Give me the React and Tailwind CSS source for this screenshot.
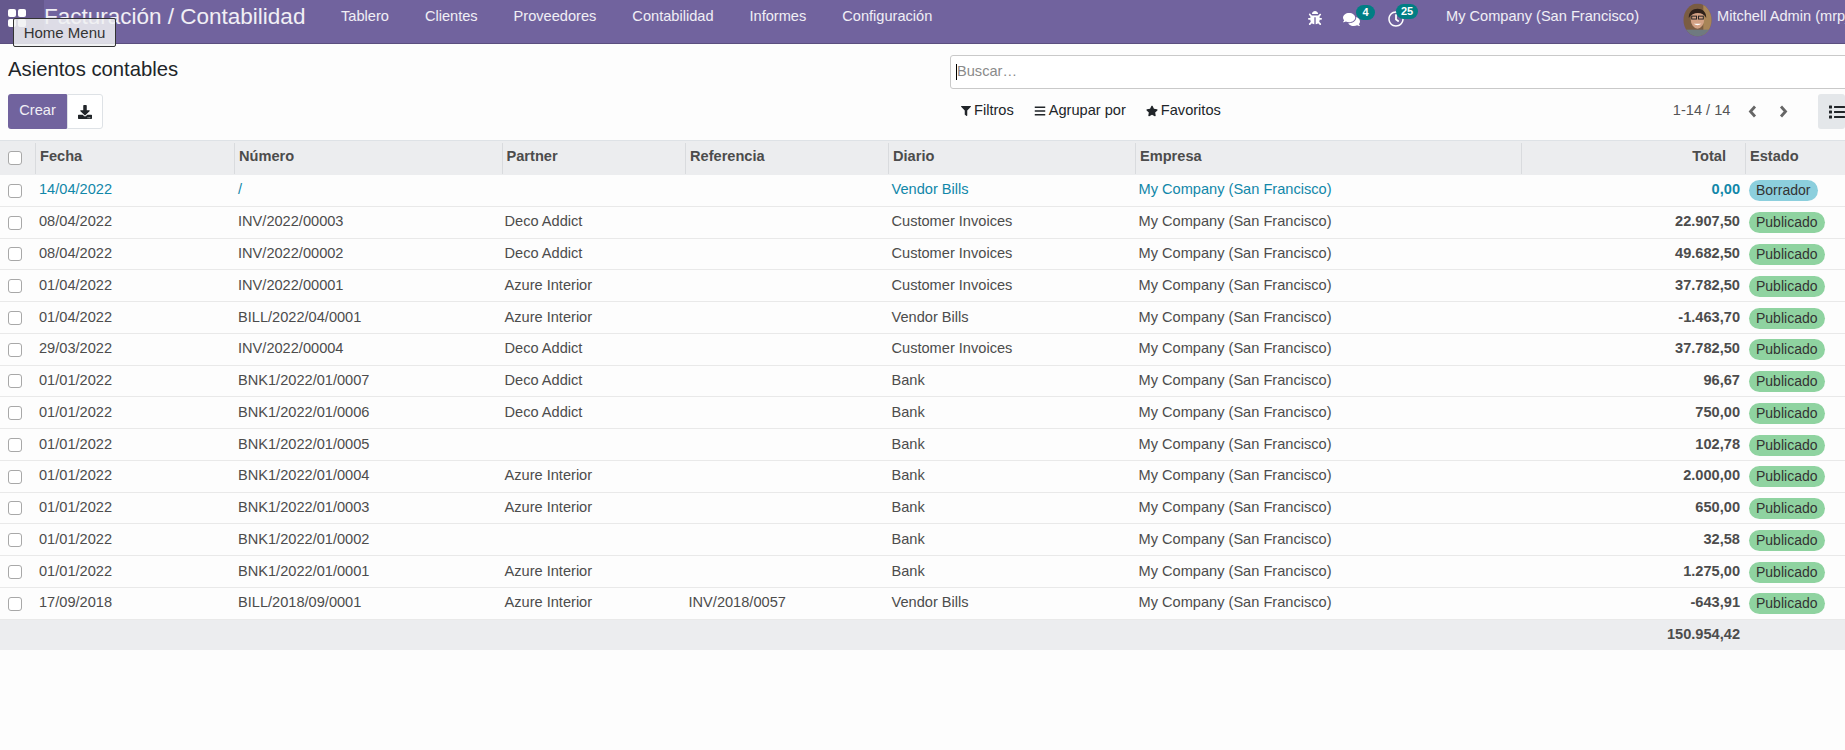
import { FaBug, FaComments, FaRegClock, FaFilter, FaBars, FaStar, FaDownload, FaList } from "react-icons/fa";

const rows = [
  ["14/04/2022", "/", "", "", "Vendor Bills", "0,00", "Borrador"],
  ["08/04/2022", "INV/2022/00003", "Deco Addict", "", "Customer Invoices", "22.907,50", "Publicado"],
  ["08/04/2022", "INV/2022/00002", "Deco Addict", "", "Customer Invoices", "49.682,50", "Publicado"],
  ["01/04/2022", "INV/2022/00001", "Azure Interior", "", "Customer Invoices", "37.782,50", "Publicado"],
  ["01/04/2022", "BILL/2022/04/0001", "Azure Interior", "", "Vendor Bills", "-1.463,70", "Publicado"],
  ["29/03/2022", "INV/2022/00004", "Deco Addict", "", "Customer Invoices", "37.782,50", "Publicado"],
  ["01/01/2022", "BNK1/2022/01/0007", "Deco Addict", "", "Bank", "96,67", "Publicado"],
  ["01/01/2022", "BNK1/2022/01/0006", "Deco Addict", "", "Bank", "750,00", "Publicado"],
  ["01/01/2022", "BNK1/2022/01/0005", "", "", "Bank", "102,78", "Publicado"],
  ["01/01/2022", "BNK1/2022/01/0004", "Azure Interior", "", "Bank", "2.000,00", "Publicado"],
  ["01/01/2022", "BNK1/2022/01/0003", "Azure Interior", "", "Bank", "650,00", "Publicado"],
  ["01/01/2022", "BNK1/2022/01/0002", "", "", "Bank", "32,58", "Publicado"],
  ["01/01/2022", "BNK1/2022/01/0001", "Azure Interior", "", "Bank", "1.275,00", "Publicado"],
  ["17/09/2018", "BILL/2018/09/0001", "Azure Interior", "INV/2018/0057", "Vendor Bills", "-643,91", "Publicado"],
];

const menu = ["Tablero", "Clientes", "Proveedores", "Contabilidad", "Informes", "Configuración"];

function Check() {
  return <span className="block w-[14px] h-[14px] ml-2 rounded-[3px] border border-[#a8a8a8] bg-white" />;
}

function Th({ children, right }) {
  return (
    <th className="p-0 font-bold align-top pt-[2px]">
      <div className={"h-[31px] border-l border-[#d9dbde] flex items-center pl-[4px] pb-[3px] " + (right ? "justify-end pr-[19px]" : "")}>
        {children}
      </div>
    </th>
  );
}

function Chevron({ points, className }) {
  return (
    <svg viewBox="0 0 9 13" className={"w-[9px] h-[13px] shrink-0 " + className}>
      <polyline points={points} fill="none" stroke="#666" strokeWidth="2.8" />
    </svg>
  );
}

function Avatar() {
  return (
    <svg viewBox="0 0 30 34" className="w-[29px] h-[34px] shrink-0">
      <defs>
        <clipPath id="av"><ellipse cx="15" cy="17" rx="14.5" ry="17" /></clipPath>
      </defs>
      <g clipPath="url(#av)">
        <rect width="30" height="34" fill="#7a5c42" />
        <rect x="21" width="9" height="34" fill="#a88558" />
        <rect y="27" width="30" height="7" fill="#6f7a80" />
        <ellipse cx="15" cy="16" rx="7" ry="10" fill="#d3a184" />
        <path d="M6 15 C5 2 25 2 24 15 C21 8 10 8 6 15Z" fill="#2e211a" />
        <rect x="9" y="13" width="5" height="3" fill="none" stroke="#222" strokeWidth="1" />
        <rect x="16" y="13" width="5" height="3" fill="none" stroke="#222" strokeWidth="1" />
        <path d="M11 21 Q15 24 19 21" fill="#fff" />
      </g>
    </svg>
  );
}

export default function App() {
  return (
    <div className="w-[1845px] h-[750px] overflow-hidden bg-[#fdfdfd] text-[14.6px] text-[#4c4c4c] font-['Liberation_Sans',Arial,sans-serif] relative">
      {/* navbar */}
      <header className="h-[44px] bg-[#71639e] border-b border-[#5b4f7f] flex items-start text-white/90 whitespace-nowrap">
        <div className="w-[44px] h-[43px] bg-black/10 flex items-start pl-2 pt-[9px] shrink-0">
          <span className="grid grid-cols-2 gap-[2px] w-[18px]">
            <i className="h-[8px] bg-white rounded-[2px]" />
            <i className="h-[8px] bg-white rounded-[2px]" />
            <i className="h-[8px] bg-white rounded-[2px]" />
            <i className="h-[8px] bg-white rounded-[2px]" />
          </span>
        </div>
        <div className="text-[22.5px] leading-[34px] w-[297px] shrink-0">Facturación / Contabilidad</div>
        <nav className="flex gap-[36px] leading-[32px] w-[501px] shrink-0">
          {menu.map((m) => <span key={m}>{m}</span>)}
        </nav>
        <div className="flex items-start pt-[10px] ml-[466px] shrink-0">
          <FaBug className="text-[14px] mt-[1px] text-white" />
          <span className="relative ml-[21px]">
            <FaComments className="text-[17px] mt-[1px] text-white" />
            <span className="absolute -top-[5px] left-[13px] h-[15px] w-[19px] rounded-full bg-[#017e84] text-white text-[11px] leading-[14px] font-bold text-center">4</span>
          </span>
          <span className="relative ml-[28px]">
            <FaRegClock className="text-[16px] text-white mt-[1px]" />
            <span className="absolute -top-[6px] left-[8px] h-[15px] w-[22px] rounded-full bg-[#017e84] text-white text-[11px] leading-[14px] font-bold text-center">25</span>
          </span>
        </div>
        <span className="leading-[32px] ml-[42px] w-[237px] shrink-0">My Company (San Francisco)</span>
        <span className="mt-[3px] mr-[5px] shrink-0"><Avatar /></span>
        <span className="leading-[32px] shrink-0">Mitchell Admin (mrp_demo)</span>
      </header>

      <div className="absolute left-[13px] top-[18px] w-[103px] h-[29px] rounded-[2px] border border-[#333] bg-[#f0f1f2]/85 text-[#333] text-[15px] leading-[27px] text-center">Home Menu</div>

      {/* control panel */}
      <div className="h-[96px] flex items-start pl-2 whitespace-nowrap">
        <div className="w-[942px] shrink-0 text-[#212529]">
          <h1 className="text-[20.3px] leading-[24px] mt-[13px] text-[#212529]">Asientos contables</h1>
          <div className="flex mt-[13px]">
            <button className="w-[59px] h-[35px] pb-[1px] bg-[#71639e] text-white/90 rounded-l-[3px] rounded-r-[1px]">Crear</button>
            <button className="w-[36px] h-[35px] border border-[#dee2e6] bg-white rounded-r-[3px] flex items-center justify-center text-[#212529]"><FaDownload className="text-[14px]" /></button>
          </div>
        </div>
        <div className="w-[895px] shrink-0 mr-[-200px]">
          <div className="h-[34px] w-[1000px] mt-[11px] pb-[1px] border border-[#c9c9c9] rounded-[3px] bg-white pl-[5px] flex items-center text-[#8a8a8a] leading-none">
            <span className="w-px h-[16px] bg-black" />Buscar…
          </div>
          <div className="flex items-center h-[35px] mt-[5px] pb-[1px] text-[#212529]">
            <span className="flex items-center ml-[11px]"><FaFilter className="text-[10px] mr-[3px]" />Filtros</span>
            <span className="flex items-center ml-[20px]"><FaBars className="text-[12px] mr-[3px]" />Agrupar por</span>
            <span className="flex items-center ml-[20px]"><FaStar className="text-[12px] mr-[3px]" />Favoritos</span>
            <span className="ml-[452px] text-[#555]">1-14 / 14</span>
            <Chevron points="7,1.5 2.5,6.5 7,11.5" className="ml-[18px]" />
            <Chevron points="2,1.5 6.5,6.5 2,11.5" className="ml-[22px]" />
            <span className="ml-[30px] w-[60px] h-[35px] mt-[1px] bg-[#e4e7ea] rounded-[3px] flex items-center pl-[11px] text-[#212529]"><FaList className="text-[16px]" /></span>
          </div>
        </div>
      </div>

      {/* list */}
      <table className="table-fixed w-[1845px] border-t border-[#dee2e6]">
        <colgroup>
          <col className="w-[35px]" />
          <col className="w-[199px]" />
          <col className="w-[267.5px]" />
          <col className="w-[183.5px]" />
          <col className="w-[203px]" />
          <col className="w-[247px]" />
          <col className="w-[386px]" />
          <col className="w-[224px]" />
          <col className="w-[100px]" />
        </colgroup>
        <thead className="bg-[#ecedef] text-left">
          <tr className="h-[34px]">
            <th className="p-0"><Check /></th>
            <Th>Fecha</Th>
            <Th>Número</Th>
            <Th>Partner</Th>
            <Th>Referencia</Th>
            <Th>Diario</Th>
            <Th>Empresa</Th>
            <Th right>Total</Th>
            <Th>Estado</Th>
          </tr>
        </thead>
        <tbody>
          {rows.map((r, i) => {
            const draft = r[6] === "Borrador";
            return (
              <tr key={i} className={"h-[31.75px] border-b border-[#e9e9e9] " + (draft ? "text-[#1187a9]" : "")}>
                <td className="p-0 pt-[1px]"><Check /></td>
                <td className="align-top pt-[4.5px] pl-[4px]">{r[0]}</td>
                <td className="align-top pt-[4.5px] pl-[4px]">{r[1]}</td>
                <td className="align-top pt-[4.5px] pl-[3px]">{r[2]}</td>
                <td className="align-top pt-[4.5px] pl-[3.5px]">{r[3]}</td>
                <td className="align-top pt-[4.5px] pl-[3.5px]">{r[4]}</td>
                <td className="align-top pt-[4.5px] pl-[3.5px]">My Company (San Francisco)</td>
                <td className="align-top pt-[4.5px] pr-[5px] text-right font-bold">{r[5]}</td>
                <td className="align-top pt-[5.5px] pl-[3.5px]">
                  <span className={"inline-block h-[21px] leading-[21px] px-[7.5px] rounded-full text-[14px] text-[#333] " + (draft ? "bg-[#8ccfdd]" : "bg-[#8fd3a0]")}>{r[6]}</span>
                </td>
              </tr>
            );
          })}
        </tbody>
        <tfoot className="bg-[#ecedef]">
          <tr className="h-[31px]">
            <td colSpan={7} />
            <td className="text-right font-bold pr-[5px]">150.954,42</td>
            <td />
          </tr>
        </tfoot>
      </table>
    </div>
  );
}
